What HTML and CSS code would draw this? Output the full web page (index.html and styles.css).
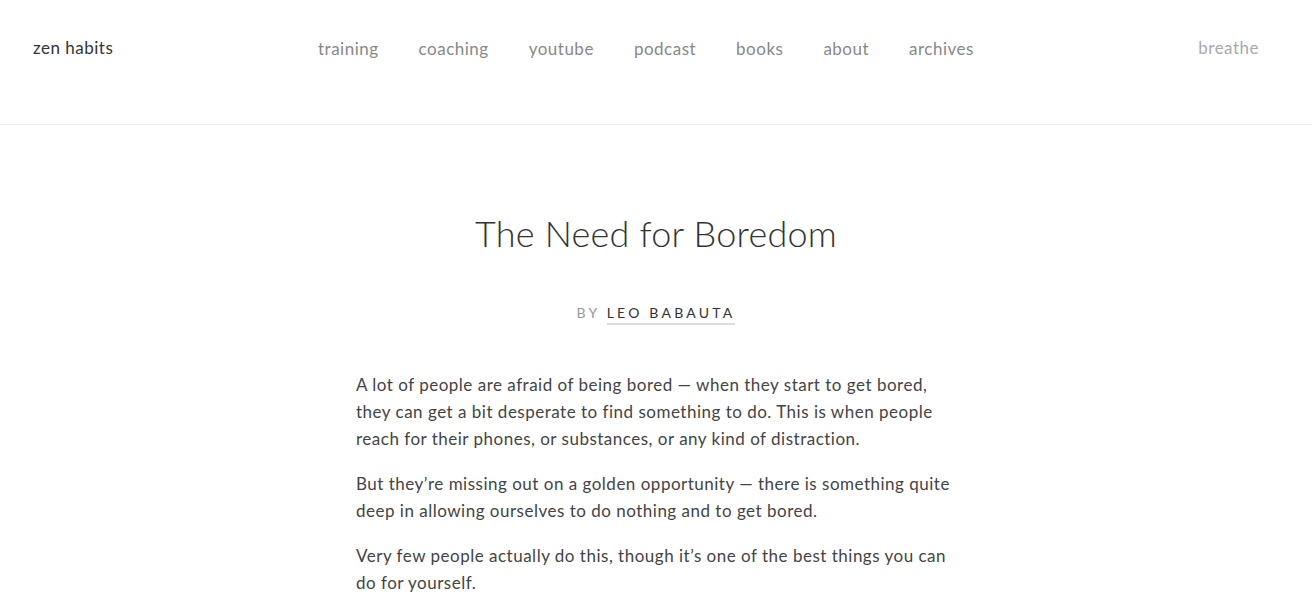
FILE: index.html
```html
<!DOCTYPE html>
<html lang="en">
<head>
<meta charset="utf-8">
<title>The Need for Boredom | zen habits</title>
<link rel="stylesheet" href="styles.css">
</head>
<body>
<header class="site-header">
  <a class="logo" href="#">zen habits</a>
  <nav class="main-nav">
    <a href="#">training</a>
    <a href="#">coaching</a>
    <a href="#">youtube</a>
    <a href="#">podcast</a>
    <a href="#">books</a>
    <a href="#">about</a>
    <a href="#">archives</a>
  </nav>
  <a class="breathe" href="#">breathe</a>
</header>
<main class="post">
  <h1 class="post-title">The Need for Boredom</h1>
  <div class="byline"><span class="by">by</span> <a class="author" href="#">Leo Babauta</a></div>
  <div class="post-body">
    <p>A lot of people are afraid of being bored — when they start to get bored, they can get a bit desperate to find something to do. This is when people reach for their phones, or substances, or any kind of distraction.</p>
    <p>But they’re missing out on a golden opportunity — there is something quite deep in allowing ourselves to do nothing and to get bored.</p>
    <p>Very few people actually do this, though it’s one of the best things you can do for yourself.</p>
  </div>
</main>
</body>
</html>
```
FILE: styles.css
```css
html, body {
  margin: 0;
  padding: 0;
  background: #fff;
}
body {
  font-family: "Lato", "Open Sans", sans-serif;
  color: #333;
  letter-spacing: 0.5px;
}
a {
  text-decoration: none;
}
.site-header {
  height: 125px;
  border-bottom: 1px solid #f0f0f0;
  display: flex;
  align-items: flex-start;
  padding: 36px 53px 0 33px;
  box-sizing: border-box;
}
.logo {
  color: #333;
  font-size: 17px;
  line-height: 24px;
  width: 285px;
}
.main-nav {
  display: flex;
  gap: 40px;
  flex: 1;
  padding-top: 1px;
}
.main-nav a {
  color: #888;
  font-size: 17px;
  line-height: 24px;
}
.breathe {
  color: #aaa;
  font-size: 17px;
  line-height: 24px;
}
.post {
  width: 600px;
  margin: 0 auto;
}
.post-title {
  font-weight: 300;
  font-size: 36px;
  line-height: 46px;
  letter-spacing: 0.2px;
  text-align: center;
  margin: 85px 0 0;
  color: #333;
}
.byline {
  text-align: center;
  margin-top: 48px;
  font-size: 14px;
  letter-spacing: 3.2px;
  text-transform: uppercase;
  line-height: 18px;
}
.by {
  color: #999;
}
.author {
  color: #333;
  border-bottom: 2px solid #ddd;
  padding-bottom: 2px;
}
.post-body {
  margin-top: 49px;
}
.post-body p {
  font-size: 17px;
  line-height: 27px;
  margin: 0 0 18px;
  color: #444;
}
```
